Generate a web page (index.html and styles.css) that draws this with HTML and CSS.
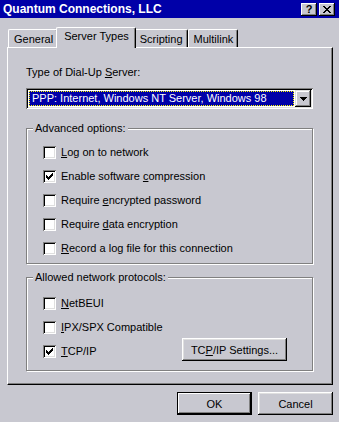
FILE: index.html
```html
<!DOCTYPE html>
<html lang="en">

<head>
    <meta charset="UTF-8">
    <title>Quantum Connections, LLC</title>
    <link rel="stylesheet" href="styles.css">
</head>

<body>
    <div class="dialog">
        <div class="titlebar">
            <span class="title">Quantum Connections, LLC</span>
            <span class="title-btn help">?</span>
            <span class="title-btn close">
                <svg width="8" height="7" viewBox="0 0 8 7" shape-rendering="crispEdges">
                    <path d="M0 0h2v1h-2z M6 0h2v1h-2z M1 1h2v1h-2z M5 1h2v1h-2z M2 2h4v1h-4z M3 3h2v1h-2z M2 4h4v1h-4z M1 5h2v1h-2z M5 5h2v1h-2z M0 6h2v1h-2z M6 6h2v1h-2z" fill="#000" />
                </svg>
            </span>
        </div>

        <div class="tabs">
            <div class="tab">General</div>
            <div class="tab active">Server Types</div>
            <div class="tab">Scripting</div>
            <div class="tab">Multilink</div>
        </div>

        <div class="panel">
            <div class="field-label">Type of Dial-Up <u>S</u>erver:</div>
            <div class="combo">
                <div class="combo-value"><span>PPP: Internet, Windows NT Server, Windows 98</span></div>
                <div class="combo-btn">
                    <svg width="7" height="4" viewBox="0 0 7 4" shape-rendering="crispEdges">
                        <path d="M0 0h7v1h-7z M1 1h5v1h-5z M2 2h3v1h-3z M3 3h1v1h-1z" fill="#000" />
                    </svg>
                </div>
            </div>

            <!-- Advanced options -->
            <div class="group advanced">
                <span class="legend">Advanced options:</span>
                <div class="check-row"><span class="box"></span><span><u>L</u>og on to network</span></div>
                <div class="check-row"><span class="box checked"><svg width="7" height="7" viewBox="0 0 7 7" shape-rendering="crispEdges"><path d="M6 0h1v1h-1z M5 1h2v1h-2z M0 2h1v1h-1z M4 2h3v1h-3z M0 3h2v1h-2z M3 3h3v1h-3z M0 4h5v1h-5z M1 5h3v1h-3z M2 6h1v1h-1z" fill="#000" /></svg></span><span>Enable software <u>c</u>ompression</span></div>
                <div class="check-row"><span class="box"></span><span>Require <u>e</u>ncrypted password</span></div>
                <div class="check-row"><span class="box"></span><span>Require <u>d</u>ata encryption</span></div>
                <div class="check-row"><span class="box"></span><span><u>R</u>ecord a log file for this connection</span></div>
            </div>

            <!-- Allowed network protocols -->
            <div class="group protocols">
                <span class="legend">Allowed network protocols:</span>
                <div class="check-row"><span class="box"></span><span><u>N</u>etBEUI</span></div>
                <div class="check-row"><span class="box"></span><span><u>I</u>PX/SPX Compatible</span></div>
                <div class="check-row">
                    <span class="box checked"><svg width="7" height="7" viewBox="0 0 7 7" shape-rendering="crispEdges"><path d="M6 0h1v1h-1z M5 1h2v1h-2z M0 2h1v1h-1z M4 2h3v1h-3z M0 3h2v1h-2z M3 3h3v1h-3z M0 4h5v1h-5z M1 5h3v1h-3z M2 6h1v1h-1z" fill="#000" /></svg></span><span><u>T</u>CP/IP</span>
                    <span class="button settings">TC<u>P</u>/IP Settings...</span>
                </div>
            </div>
        </div>

        <div class="footer">
            <span class="button default">OK</span>
            <span class="button">Cancel</span>
        </div>
    </div>
</body>

</html>
```

FILE: styles.css
```css
* {
    padding: 0;
    margin: 0;
    box-sizing: border-box;
}

body {
    background: #c8c8d0;
    font-family: "Liberation Sans", Arial, sans-serif;
    font-size: 11px;
    color: #000000;
}

u {
    text-decoration: underline;
    text-underline-offset: 1px;
}

.dialog {
    width: 339px;
    height: 422px;
    display: flex;
    flex-direction: column;
}

/* title bar */
.titlebar {
    height: 18px;
    background: #0000a8;
    color: #ffffff;
    display: flex;
    align-items: center;
    padding: 0 4px 0 3px;
}

.title {
    flex: 1;
    font-weight: bold;
    font-size: 12px;
}

.title-btn {
    width: 16px;
    height: 13px;
    background: #c8c8d0;
    color: #000000;
    font-weight: bold;
    font-size: 11px;
    line-height: 13px;
    display: flex;
    align-items: center;
    justify-content: center;
    box-shadow: inset -1px -1px #000000, inset 1px 1px #ffffff, inset -2px -2px #808080;
}

.title-btn + .title-btn {
    margin-left: 2px;
}

/* tabs */
.tabs {
    display: flex;
    align-items: flex-end;
    height: 20px;
    margin: 9px 0 0 8px;
    position: relative;
    z-index: 1;
}

.tab {
    height: 18px;
    padding: 1px 4px 0 5px;
    line-height: 17px;
    background: #c8c8d0;
    border-left: 1px solid #ffffff;
    border-top: 1px solid #ffffff;
    border-right: 1px solid #000000;
    border-radius: 2px 2px 0 0;
    box-shadow: inset -1px 0 #808080;
}

.tab.active {
    height: 21px;
    margin: 0 -2px -1px -2px;
    padding: 0 6px 0 7px;
    line-height: 16px;
    position: relative;
    z-index: 2;
}

/* panel */
.panel {
    height: 338px;
    margin: 0 6px 0 7px;
    padding: 18px 19px 0 18px;
    border: 1px solid;
    border-color: #ffffff #000000 #000000 #ffffff;
    box-shadow: inset -1px -1px #808080;
}

.field-label {
    height: 13px;
    line-height: 13px;
    margin-bottom: 9px;
}

.combo {
    height: 21px;
    display: flex;
    align-items: center;
    padding: 2px;
    background: #ffffff;
    box-shadow: inset 1px 1px #808080, inset -1px -1px #ffffff, inset 2px 2px #000000, inset -2px -2px #dfdfdf;
}

.combo-value {
    flex: 1;
    height: 17px;
    padding: 1px;
}

.combo-value span {
    display: block;
    height: 15px;
    line-height: 13px;
    padding-left: 2px;
    background: #0000a8;
    color: #ffffff;
    border: 1px dotted #ffff00;
}

.combo-btn {
    width: 16px;
    height: 17px;
    background: #c8c8d0;
    display: flex;
    align-items: center;
    justify-content: center;
    box-shadow: inset -1px -1px #000000, inset 1px 1px #dfdfdf, inset -2px -2px #808080, inset 2px 2px #ffffff;
}

/* group boxes */
.group {
    position: relative;
    border: 1px solid #808080;
    box-shadow: inset 1px 1px #ffffff, 1px 1px #ffffff;
    padding: 11px 0 0 16px;
}

.advanced {
    margin-top: 19px;
    height: 136px;
}

.protocols {
    margin-top: 13px;
    height: 94px;
    padding-top: 13px;
}

.legend {
    position: absolute;
    top: -7px;
    left: 6px;
    padding: 0 2px 0 2px;
    line-height: 13px;
    background: #c8c8d0;
}

.check-row {
    height: 24px;
    display: flex;
    align-items: center;
}

.box {
    width: 13px;
    height: 13px;
    margin-right: 5px;
    background: #ffffff;
    display: flex;
    align-items: center;
    justify-content: center;
    box-shadow: inset 1px 1px #808080, inset -1px -1px #ffffff, inset 2px 2px #000000, inset -2px -2px #dfdfdf;
}

/* buttons */
.button {
    width: 75px;
    height: 23px;
    display: flex;
    align-items: center;
    justify-content: center;
    background: #c8c8d0;
    box-shadow: inset -1px -1px #000000, inset 1px 1px #ffffff, inset -2px -2px #808080, inset 2px 2px #dfdfdf;
}

.button.settings {
    width: 105px;
    margin-left: auto;
    margin-right: 25px;
    margin-top: -3px;
}

.button.default {
    border: 1px solid #000000;
    box-shadow: inset -1px -1px #000000, inset 1px 1px #ffffff, inset -2px -2px #808080;
}

.footer {
    display: flex;
    justify-content: flex-end;
    gap: 6px;
    padding: 7px 6px 0 0;
}
```
